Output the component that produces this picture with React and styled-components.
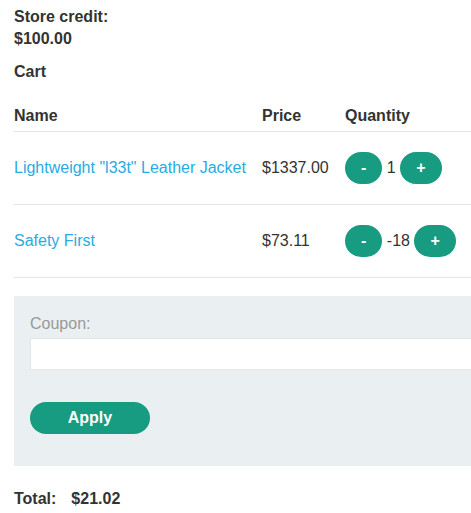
import React from "react";
import styled, { createGlobalStyle } from "styled-components";

const Global = createGlobalStyle`
  html, body { margin: 0; padding: 0; overflow: hidden; background: #fff; }
  body { font-family: "Liberation Sans", Arial, sans-serif; font-size: 16px; color: #333332; }
`;

const Page = styled.div`
  width: 720px;
  padding: 6px 0 0 14px;
  box-sizing: border-box;
`;

const Credit = styled.p`
  margin: 0;
  width: 140px;
  font-weight: bold;
  line-height: 22px;
`;

const Heading = styled.p`
  margin: 11px 0 0;
  font-weight: bold;
  line-height: 22px;
`;

const Table = styled.table`
  margin-top: 22px;
  width: 100%;
  border-collapse: collapse;
  table-layout: fixed;
`;

const Th = styled.th`
  text-align: left;
  font-weight: bold;
  line-height: 22px;
  padding: 0 16px 4px 0;
  border-bottom: 1px solid #e6e6e6;
  width: ${(p) => p.$w || "auto"};
`;

const Td = styled.td`
  line-height: 22px;
  padding: 20px 16px 20px 0;
  border-bottom: 1px solid #e6e6e6;
  height: 32px;
  white-space: nowrap;
`;

const ItemLink = styled.a`
  color: #29abe2;
  text-decoration: none;
`;

const Qty = styled.div`
  display: flex;
  align-items: center;
  gap: 4.5px;
`;

const Button = styled.button`
  height: 32px;
  padding: 0 16px;
  border: 0;
  border-radius: 20px;
  background: #179b81;
  color: #fff;
  font-family: "Liberation Sans", Arial, sans-serif;
  font-size: 16px;
  font-weight: bold;
  cursor: pointer;
  width: ${(p) => p.$w || "auto"};
`;

const CouponBox = styled.form`
  margin-top: 18px;
  background: #eaeff2;
  padding: 17px 16px 32px;
  display: flex;
  flex-direction: column;
`;

const Label = styled.label`
  color: #999;
  line-height: 22px;
`;

const Input = styled.input`
  margin-top: 3px;
  height: 32px;
  box-sizing: border-box;
  border: 1px solid #e2e4e6;
  background: #fff;
  width: 100%;
`;

const ApplyRow = styled.div`
  margin-top: 32px;
`;

const TotalTable = styled.table`
  margin-top: 22px;
  border-collapse: collapse;
  font-weight: bold;
`;

const TotalCell = styled.th`
  text-align: left;
  padding: 0 15px 0 0;
  line-height: 22px;
`;

const items = [
  { name: 'Lightweight "l33t" Leather Jacket', price: "$1337.00", qty: 1 },
  { name: "Safety First", price: "$73.11", qty: -18 },
];

export default function App() {
  return (
    <>
      <Global />
      <Page>
        <Credit>Store credit: $100.00</Credit>
        <Heading>Cart</Heading>
        <Table>
          <thead>
            <tr>
              <Th $w="232px">Name</Th>
              <Th $w="67px">Price</Th>
              <Th $w="164px">Quantity</Th>
              <Th></Th>
            </tr>
          </thead>
          <tbody>
            {items.map((it) => (
              <tr key={it.name}>
                <Td>
                  <ItemLink href="#">{it.name}</ItemLink>
                </Td>
                <Td>{it.price}</Td>
                <Td>
                  <Qty>
                    <Button type="button">-</Button>
                    <span>{it.qty}</span>
                    <Button type="button">+</Button>
                  </Qty>
                </Td>
                <Td></Td>
              </tr>
            ))}
          </tbody>
        </Table>
        <CouponBox onSubmit={(e) => e.preventDefault()}>
          <Label htmlFor="coupon">Coupon:</Label>
          <Input id="coupon" type="text" />
          <ApplyRow>
            <Button type="submit" $w="120px">Apply</Button>
          </ApplyRow>
        </CouponBox>
        <TotalTable>
          <tbody>
            <tr>
              <TotalCell>Total:</TotalCell>
              <TotalCell>$21.02</TotalCell>
            </tr>
          </tbody>
        </TotalTable>
      </Page>
    </>
  );
}
